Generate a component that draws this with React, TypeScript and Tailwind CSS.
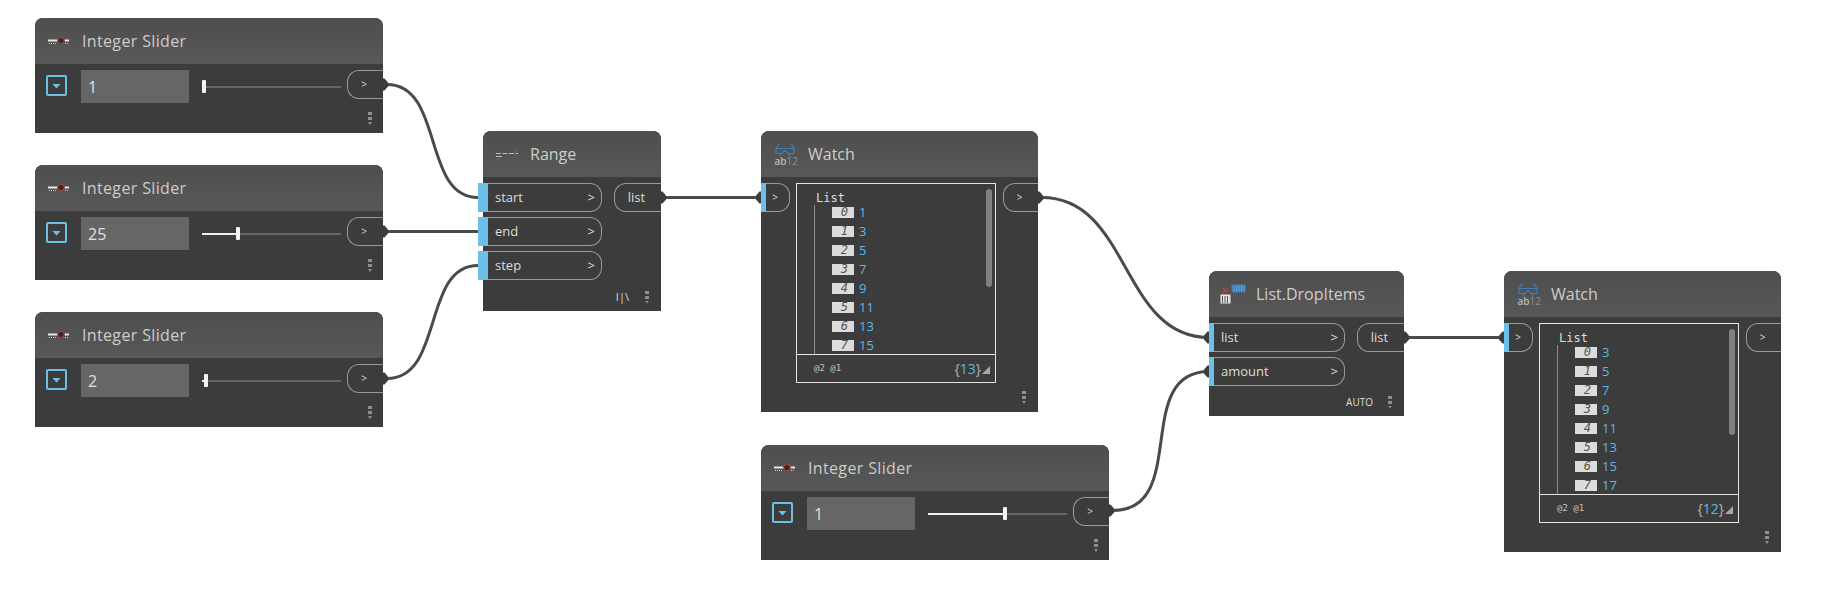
import type { ReactNode } from "react";

const sans = "font-['Open_Sans','Noto_Sans',sans-serif]";
const mono = "font-['DejaVu_Sans_Mono',monospace]";

function SliderIcon() {
  return (
    <svg width="22" height="10" viewBox="0 0 22 10" className="shrink-0">
      <rect x="0" y="3.5" width="21" height="2" fill="#e6e6e6" />
      <path d="M1 7.5h7" stroke="#cfcfcf" strokeWidth="1" strokeDasharray="1 1" />
      <path d="M17 7.5h4" stroke="#cfcfcf" strokeWidth="1" strokeDasharray="1 1" />
      <circle cx="13" cy="4.5" r="3.2" fill="#2c2c2c" stroke="#a83c3c" strokeWidth="1.2" />
    </svg>
  );
}

function RangeIcon() {
  return (
    <svg width="24" height="14" viewBox="0 0 24 14" className="shrink-0">
      <path d="M1 6.5h22" stroke="#bdbdbd" strokeWidth="1" strokeDasharray="5 1.5" />
      <path d="M1 9.5h6" stroke="#bdbdbd" strokeWidth="1" />
      <path d="M19 2.5h4l-2 3z" fill="#a84848" />
      <path d="M1 13l2-3 2 3z" fill="#a84848" />
    </svg>
  );
}

function WatchIcon() {
  return (
    <div className="relative h-[23px] w-[20px] shrink-0">
      <svg width="20" height="15" viewBox="0 0 20 15" className="absolute left-0 top-0">
        <path
          d="M4 0.8 1 5.5v5h5.5L10 7.5l3.5 3H19v-5L16 0.8M1 5.5h18M6.5 10.5 4.5 13.5M13.5 10.5 15.5 13.5"
          fill="none"
          stroke="#3f7fb8"
          strokeWidth="1.2"
        />
      </svg>
      <span className={`absolute left-0 top-[13px] text-[10px] leading-[10px] font-semibold text-[#b8b8b8] ${sans}`}>
        ab<span className="font-normal text-[#8f8f8f]">12</span>
      </span>
    </div>
  );
}

function DropIcon() {
  return (
    <svg width="26" height="20" viewBox="0 0 26 20" className="shrink-0">
      <rect x="11.5" y="0.5" width="14" height="8" fill="#3f7fb8" />
      <path d="M14 1.5v6M16.5 1.5v6M19 1.5v6M21.5 1.5v6M24 1.5v6" stroke="#6fa3d0" strokeWidth="1" />
      <path d="M3 4l5 5M8 4l-5 5" stroke="#a84848" strokeWidth="1.6" />
      <rect x="0.5" y="10.5" width="10" height="9" fill="#e4e4e4" />
      <path d="M2.5 12v7M5 12v7M7.5 12v7" stroke="#555" strokeWidth="1" />
    </svg>
  );
}

function Dots() {
  return (
    <div className="flex w-[4px] flex-col items-center gap-[2px]">
      <span className="h-[3px] w-[4px] bg-[#8f8f8f]" />
      <span className="h-[3px] w-[4px] bg-[#8f8f8f]" />
      <span className="h-[3px] w-[4px] bg-[#8f8f8f] [clip-path:polygon(0_0,100%_0,50%_100%)]" />
    </div>
  );
}

function Node({
  className,
  title,
  titleClass = "",
  icon,
  children,
}: {
  className: string;
  title: string;
  titleClass?: string;
  icon: ReactNode;
  children: ReactNode;
}) {
  return (
    <div className={`absolute flex flex-col rounded-t-[8px] bg-[#3c3c3c] ${className}`}>
      <div className="flex h-[46px] items-center rounded-t-[8px] bg-gradient-to-b from-[#4e4e4e] to-[#585858]">
        <div className="flex w-[47px] items-center justify-center">{icon}</div>
        <span className={`text-[16px] text-[#cccccc] ${sans} ${titleClass}`}>{title}</span>
      </div>
      {children}
    </div>
  );
}

function InPort({ label, wide, bar }: { label: string; wide: string; bar: string }) {
  return (
    <div className={`flex h-[29px] ${wide}`}>
      <span className={`bg-[#6ac0e7] ${bar}`} />
      <div className={`flex flex-1 items-center justify-between rounded-r-[12px] border border-l-0 border-[#9a9a9a] pl-[7px] pr-[6px] text-[13px] text-[#dcdcdc] ${sans}`}>
        <span>{label}</span>
        <span>&gt;</span>
      </div>
    </div>
  );
}

function OutPort({ label, wide }: { label?: string; wide: string }) {
  return (
    <div className={`flex h-[29px] items-center justify-center rounded-l-[12px] border border-r-0 border-[#9a9a9a] pr-[3px] text-[13px] text-[#dcdcdc] ${sans} ${wide}`}>
      {label ?? <span className="text-[10px]">&gt;</span>}
    </div>
  );
}

function SliderNode({
  className,
  value,
  fill,
}: {
  className: string;
  value: string;
  fill: string;
}) {
  return (
    <Node className={className} title="Integer Slider" titleClass="tracking-[0.35px]" icon={<SliderIcon />}>
      <div className="flex items-start pt-[6px]">
        <div className="ml-[11px] mt-[5px] flex h-[21px] w-[21px] items-center justify-center rounded-[2px] border-2 border-[#6ac0e7]">
          <span className="mt-[1px] h-[5px] w-[9px] bg-[#6ac0e7] [clip-path:polygon(0_0,100%_0,50%_100%)]" />
        </div>
        <div className={`ml-[14px] flex h-[33px] w-[108px] items-center bg-[#666666] pl-[7px] text-[16px] text-[#e0e0e0] ${sans}`}>
          {value}
        </div>
        <div className="ml-[13px] mt-[16px] flex h-[2px] w-[139px] bg-[#666666]">
          <span className={`h-[2px] bg-[#f0f0f0] ${fill}`} />
          <span className="-mt-[6px] h-[13px] w-[4px] rounded-[1px] bg-[#f4f4f4]" />
        </div>
        <div className="ml-auto">
          <OutPort wide="w-[36px]" />
        </div>
      </div>
      <div className="mt-auto flex justify-end pb-[8px] pr-[11px]">
        <Dots />
      </div>
    </Node>
  );
}

function WatchNode({
  className,
  items,
  count,
  bar,
}: {
  className: string;
  items: number[];
  count: number;
  bar: string;
}) {
  return (
    <Node className={className} title="Watch" icon={<WatchIcon />}>
      <div className="flex items-start gap-[6px] pt-[6px]">
        <div className="flex h-[29px] w-[29px]">
          <span className="w-[5px] bg-[#6ac0e7]" />
          <div className={`flex flex-1 items-center justify-center rounded-r-[12px] border border-l-0 border-[#9a9a9a] pr-[5px] text-[10px] text-[#dcdcdc] ${sans}`}>
            &gt;
          </div>
        </div>
        <div className="flex h-[200px] w-[200px] flex-col border border-[#e4e4e4]">
          <div className="relative h-[170px] overflow-hidden">
            <div className={`pl-[19px] pt-[6px] text-[12px] leading-[16px] text-[#dcdcdc] ${mono}`}>List</div>
            <span className="absolute left-[17px] top-[21px] h-[150px] w-px bg-[#8a8a8a]" />
            <span className={`absolute left-[189px] top-[5px] w-[6px] rounded-[3px] bg-[#808080] ${bar}`} />
            <div className="flex flex-col gap-[8px] pl-[35px] pt-[1px]">
              {items.map((v, i) => (
                <div key={i} className="flex h-[11px] items-center gap-[5px]">
                  <span className={`h-[11px] w-[22px] bg-[#dcdcdc] pr-[6px] text-right text-[12px] italic leading-[10px] text-[#555555] ${mono}`}>
                    {i}
                  </span>
                  <span className={`text-[13px] leading-[11px] text-[#5cb6e4] ${sans}`}>{v}</span>
                </div>
              ))}
            </div>
          </div>
          <div className="flex flex-1 items-center justify-between border-t border-[#e4e4e4] pl-[17px] pr-[5px]">
            <span className={`text-[9px] text-[#c4c4c4] ${mono}`}>@2 @1</span>
            <div className="flex items-center gap-[1px]">
              <span className={`text-[14px] text-[#b4b4b4] ${sans}`}>
                {"{"}
                <span className="text-[#5cb6e4]">{count}</span>
                {"}"}
              </span>
              <span className="mt-[3px] h-[8px] w-[8px] bg-[#a8a8a8] [clip-path:polygon(100%_0,100%_100%,0_100%)]" />
            </div>
          </div>
        </div>
        <div className="ml-auto">
          <OutPort wide="w-[35px]" />
        </div>
      </div>
      <div className="mt-auto flex justify-end pb-[8px] pr-[12px]">
        <Dots />
      </div>
    </Node>
  );
}

function Wires() {
  const wires = [
    "M387 84.5 C444 84.5 422 197.5 478 197.5",
    "M387 231.5 L478 231.5",
    "M387 378.5 C444 378.5 422 265.5 478 265.5",
    "M665 197.5 L761 197.5",
    "M1042 197.5 C1130 197.5 1121 337.5 1209 337.5",
    "M1113 510.5 C1190 510.5 1132 371.5 1209 371.5",
    "M1408 337.5 L1504 337.5",
  ];
  const pins = [
    [383, 84.5, 1], [383, 231.5, 1], [383, 378.5, 1],
    [661, 197.5, 1], [761, 197.5, -1],
    [1038, 197.5, 1], [1209, 337.5, -1], [1209, 371.5, -1],
    [1109, 510.5, 1], [1404, 337.5, 1], [1504, 337.5, -1],
  ];
  return (
    <svg width="1826" height="606" className="absolute left-0 top-0">
      {wires.map((d) => (
        <path key={d} d={d} fill="none" stroke="#4a4a4a" strokeWidth="3" />
      ))}
      {pins.map(([x, y, dir]) => (
        <path
          key={`${x}-${y}`}
          d={`M${x} ${y - 6} L${x + dir * 1.5} ${y - 6} L${x + dir * 5} ${y - 2} L${x + dir * 5} ${y + 2} L${x + dir * 1.5} ${y + 6} L${x} ${y + 6}Z`}
          fill="#3c3c3c"
        />
      ))}
    </svg>
  );
}

export default function App() {
  return (
    <div className="relative h-[606px] w-[1826px] overflow-hidden bg-white">
      <Wires />

      <SliderNode className="left-[35px] top-[18px] h-[115px] w-[348px]" value="1" fill="w-0" />
      <SliderNode className="left-[35px] top-[165px] h-[115px] w-[348px]" value="25" fill="w-[34px]" />
      <SliderNode className="left-[35px] top-[312px] h-[115px] w-[348px]" value="2" fill="w-[2px]" />
      <SliderNode className="left-[761px] top-[445px] h-[115px] w-[348px]" value="1" fill="w-[75px]" />

      <Node className="left-[483px] top-[131px] h-[180px] w-[178px]" title="Range" icon={<RangeIcon />}>
        <div className="flex items-start pt-[6px]">
          <div className="-ml-[5px] flex flex-col gap-[5px]">
            <InPort label="start" wide="w-[124px]" bar="w-[10px]" />
            <InPort label="end" wide="w-[124px]" bar="w-[10px]" />
            <InPort label="step" wide="w-[124px]" bar="w-[10px]" />
          </div>
          <div className="ml-auto">
            <OutPort label="list" wide="w-[47px]" />
          </div>
        </div>
        <div className="mt-auto flex items-center justify-end gap-[16px] pb-[7px] pr-[12px]">
          <span className={`text-[11px] leading-[14px] text-[#dcdcdc] ${sans}`}>I|\</span>
          <Dots />
        </div>
      </Node>

      <WatchNode
        className="left-[761px] top-[131px] h-[281px] w-[277px]"
        items={[1, 3, 5, 7, 9, 11, 13, 15]}
        count={13}
        bar="h-[98px]"
      />

      <Node className="left-[1209px] top-[271px] h-[145px] w-[195px]" title="List.DropItems" icon={<DropIcon />}>
        <div className="flex items-start pt-[6px]">
          <div className="flex flex-col gap-[5px]">
            <InPort label="list" wide="w-[136px]" bar="w-[5px]" />
            <InPort label="amount" wide="w-[136px]" bar="w-[5px]" />
          </div>
          <div className="ml-auto">
            <OutPort label="list" wide="w-[47px]" />
          </div>
        </div>
        <div className="mt-auto flex items-center justify-end gap-[15px] pb-[7px] pr-[12px]">
          <span className={`text-[10px] leading-[14px] text-[#dcdcdc] ${sans}`}>AUTO</span>
          <Dots />
        </div>
      </Node>

      <WatchNode
        className="left-[1504px] top-[271px] h-[281px] w-[277px]"
        items={[3, 5, 7, 9, 11, 13, 15, 17]}
        count={12}
        bar="h-[106px]"
      />
    </div>
  );
}
